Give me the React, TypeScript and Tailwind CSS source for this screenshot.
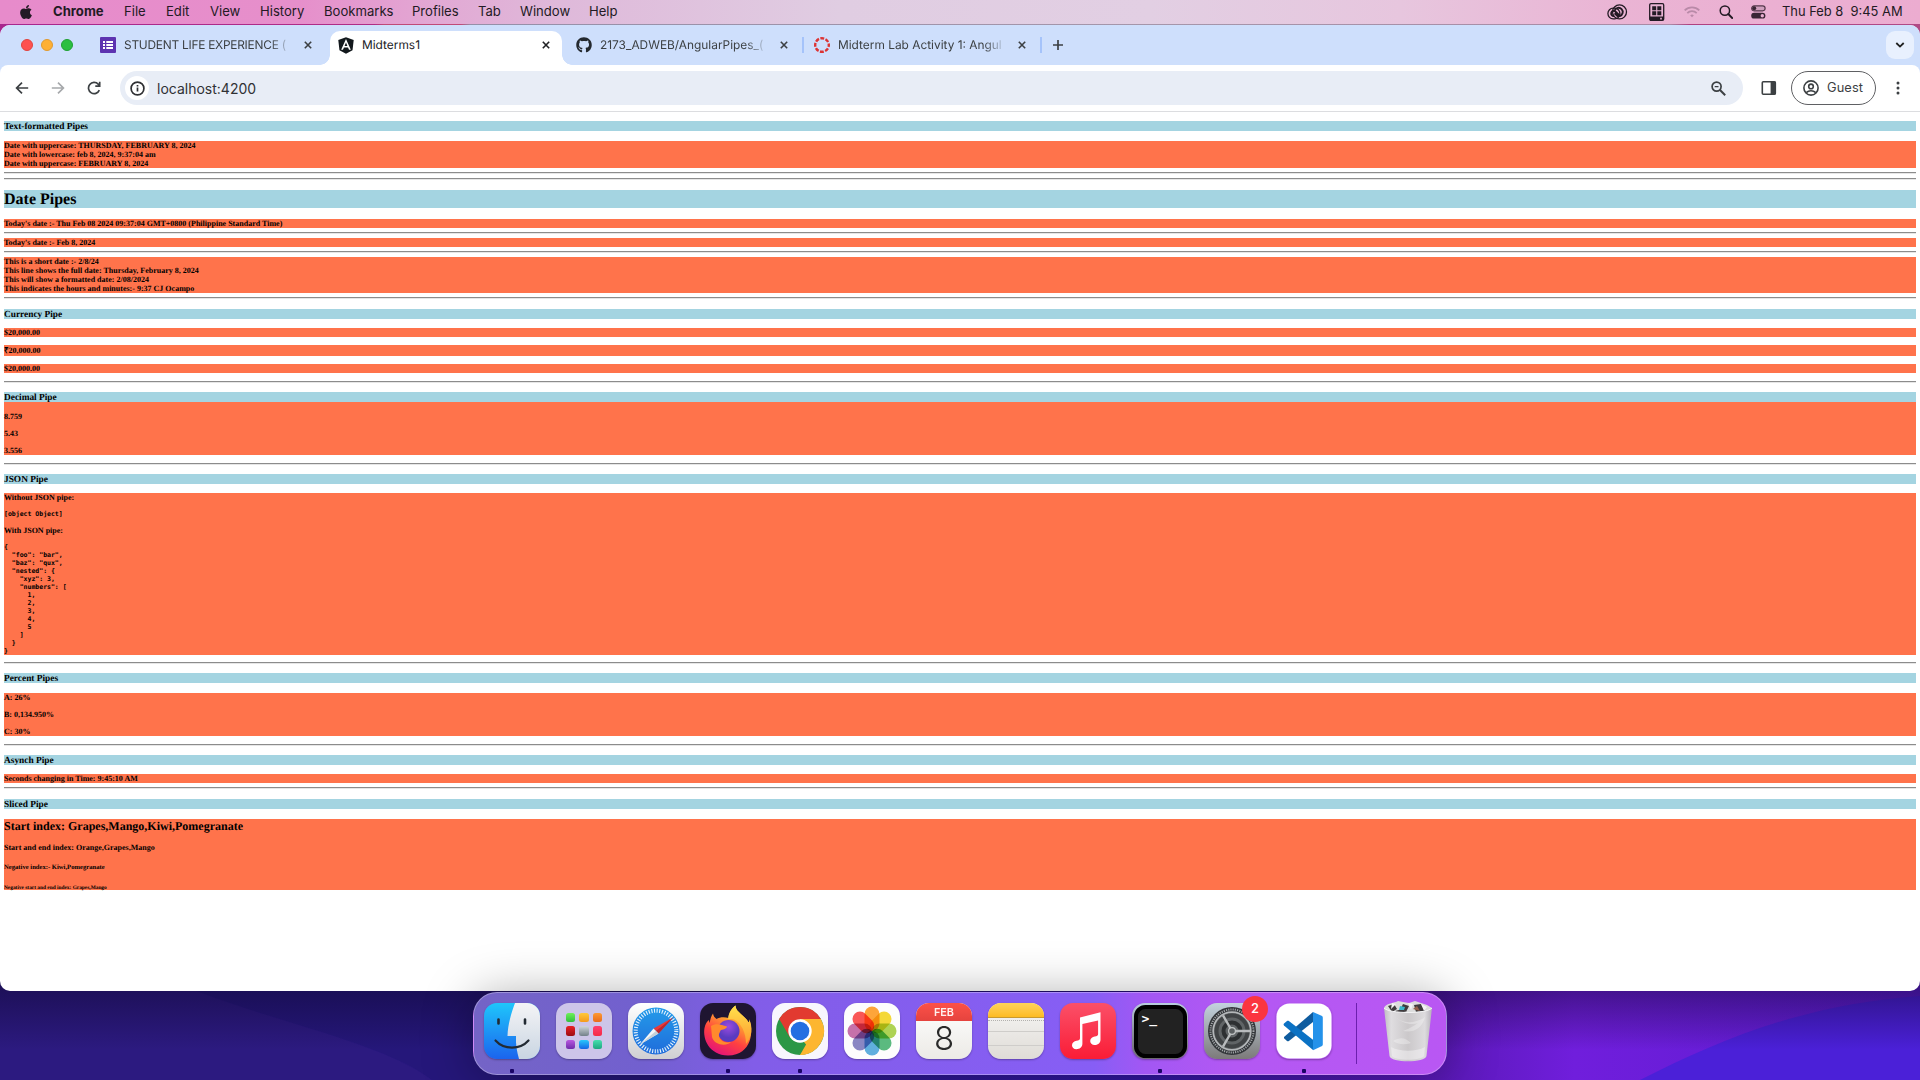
import React from "react";
import { FaAngular, FaApple, FaGithub } from "react-icons/fa";

const SERIF = "font-['Liberation_Serif',serif]";

/* ---------- menu bar ---------- */

const menus: [string, string][] = [
  ["Chrome", "w-[71px] font-bold"],
  ["File", "w-[42px]"],
  ["Edit", "w-[44px]"],
  ["View", "w-[50px]"],
  ["History", "w-[64px]"],
  ["Bookmarks", "w-[88px]"],
  ["Profiles", "w-[66px]"],
  ["Tab", "w-[42px]"],
  ["Window", "w-[69px]"],
  ["Help", "w-[40px]"],
];

function MenuBar() {
  return (
    <div className="relative flex h-[24px] shrink-0 items-center bg-[linear-gradient(90deg,#e78bcb_0,#e68fcb_300px,#e2a9d4_440px,#dfb9da_560px,#e0cde2_840px,#e2cfe3_1150px,#e7c6de_1400px,#eab4d4_1620px,#ecacd0_1920px)] font-['Inter',sans-serif] text-[13.1px] text-[#231a24]">
      <FaApple className="ml-[19px] mr-[20px] -mt-px size-[16px] w-[14px]" />
      {menus.map(([m, c]) => (
        <span key={m} className={"whitespace-nowrap " + c}>
          {m}
        </span>
      ))}
      <div className="ml-auto flex items-center">
        <svg className="mr-[21px] h-[16px] w-[21px]" viewBox="0 0 21 16" fill="none" stroke="#231a24">
          <rect x="5.500" y=".9" width="14" height="14" rx="7" strokeWidth="1.300" />
          <rect x=".9" y="4.200" width="12" height="10.700" rx="5.300" strokeWidth="1.300" />
          <path d="M12.500 11.500L8.600 7.700a2.600 2.600 0 1 0-1.500 4.400M7.600 6.600a4.200 4.200 0 1 1 5.200 5.400H10.500L7.600 9.300" strokeWidth="1.900" />
        </svg>
        <svg className="mr-[19px] h-[18px] w-[16px]" viewBox="0 0 16 18">
          <rect x=".7" y=".7" width="14" height="16.600" rx="1.300" fill="none" stroke="#231a24" strokeWidth="1.300" />
          <path d="M3.200 3.200h4v4h-4zM8.300 3.200h4v4h-4zM3.200 8.200h4v4h-4zM8.300 8.200h4v4h-4zM1 13.600h13.600V17H1z" fill="#231a24" />
          <path d="M11.200 14.800h1.600v1.600h-1.600z" fill="#eab8d6" />
        </svg>
        <svg className="mr-[19px] h-[12px] w-[16px]" viewBox="0 0 16 12" fill="none" stroke="#b98aa8" strokeWidth="1.800">
          <path d="M.7 4.400a10.500 10.500 0 0 1 14.600 0M3.300 7.100a6.700 6.700 0 0 1 9.400 0" />
          <path d="M6.200 9.400a2.400 2.400 0 0 1 3.600 0L8 11.300z" fill="#b98aa8" stroke="none" />
        </svg>
        <svg className="mr-[18px] h-[14px] w-[14px]" viewBox="0 0 14 14" fill="none" stroke="#231a24" strokeWidth="1.500">
          <circle cx="5.900" cy="5.600" r="4.700" />
          <path d="M9.300 9l3.900 4" strokeWidth="1.800" strokeLinecap="round" />
        </svg>
        <svg className="mr-[16px] h-[14px] w-[15px]" viewBox="0 0 15 14">
          <rect x=".7" y=".9" width="13.400" height="4.900" rx="2.450" fill="#cf9fbd" stroke="#54374b" strokeWidth="1.200" />
          <circle cx="3.200" cy="3.300" r="2" fill="#3a2635" />
          <rect x=".2" y="7.800" width="14.200" height="5.800" rx="2.900" fill="#3a2635" />
          <circle cx="11.300" cy="10.700" r="1.700" fill="#eab0d2" />
        </svg>
        <span className="w-[138px] whitespace-pre text-[12.9px]">Thu Feb 8&nbsp; 9:45 AM</span>
      </div>
    </div>
  );
}

/* ---------- browser chrome ---------- */

function Close({ c }: { c: string }) {
  return (
    <svg className={"size-[8px] shrink-0 " + c} viewBox="0 0 8 8" stroke="currentColor" strokeWidth="1.600">
      <path d="M.8.8l6.400 6.400M7.200.8L.8 7.200" />
    </svg>
  );
}

function Tabs() {
  return (
    <div className="flex h-[40px] shrink-0 items-center bg-[#cedffc] font-['Inter',sans-serif] text-[11.9px] text-[#3c4043] [text-rendering:geometricPrecision]">
      <div className="ml-[21px] flex gap-[8px]">
        <i className="size-[12px] rounded-full border border-[#e0443e] bg-[#fe5150]" />
        <i className="size-[12px] rounded-full border border-[#e09a30] bg-[#feb035]" />
        <i className="size-[12px] rounded-full border border-[#1fa032] bg-[#2bbf40]" />
      </div>
      <svg className="ml-[27px] size-[16px] shrink-0" viewBox="0 0 16 16">
        <rect width="16" height="16" rx="1" fill="#5d33b0" />
        <path d="M3 4h2v2H3zM6.300 4H13v2H6.300zM3 7h2v2H3zM6.300 7H13v2H6.300zM3 10h2v2H3zM6.300 10H13v2H6.300z" fill="#fff" />
      </svg>
      <span className="ml-[8px] w-[168px] whitespace-nowrap tracking-[-0.24px] [mask-image:linear-gradient(90deg,#000_146px,transparent)]">
        STUDENT LIFE EXPERIENCE (
      </span>
      <Close c="ml-[12px] mr-[18px]" />
      <div className="relative mt-[6px] flex h-[34px] w-[232px] items-center rounded-t-[10px] bg-white pb-[6px] text-[#202124]">
        <i className="absolute -left-[10px] bottom-0 size-[10px] bg-[radial-gradient(circle_at_0_0,#cedffc_9.5px,#fff_10px)]" />
        <i className="absolute -right-[10px] bottom-0 size-[10px] bg-[radial-gradient(circle_at_100%_0,#cedffc_9.5px,#fff_10px)]" />
        <FaAngular className="ml-[6px] h-[19px] w-[20px] text-[#12181c]" />
        <span className="ml-[6px]">Midterms1</span>
        <Close c="ml-auto mr-[12px]" />
      </div>
      <FaGithub className="ml-[14px] size-[16px] shrink-0 text-[#24292f]" />
      <span className="ml-[8px] w-[168px] whitespace-nowrap [mask-image:linear-gradient(90deg,#000_146px,transparent)]">
        2173_ADWEB/AngularPipes_(
      </span>
      <Close c="ml-[12px]" />
      <i className="ml-[14px] h-[16px] w-[2px] bg-[#a5c3fa]" />
      <svg className="ml-[10px] size-[16px] shrink-0" viewBox="0 0 16 16" fill="none">
        <circle cx="8" cy="8" r="6.800" stroke="#dc3434" strokeWidth="2.400" strokeDasharray="3.900 1.440" strokeDashoffset="1.900" />
      </svg>
      <span className="ml-[8px] w-[168px] whitespace-nowrap [mask-image:linear-gradient(90deg,#000_146px,transparent)]">
        Midterm Lab Activity 1: Angul
      </span>
      <Close c="ml-[12px]" />
      <i className="ml-[14px] h-[16px] w-[2px] bg-[#a5c3fa]" />
      <svg className="ml-[10px] size-[12px] shrink-0" viewBox="0 0 12 12" stroke="#3c4043" strokeWidth="1.700">
        <path d="M6 1v10M1 6h10" />
      </svg>
      <div className="ml-auto mr-[6px] flex size-[28px] items-center justify-center rounded-[9px] bg-[#e8f0fe]">
        <svg className="size-[10px]" viewBox="0 0 10 10" fill="none" stroke="#1f1f1f" strokeWidth="1.800">
          <path d="M1.300 3L5 6.600 8.700 3" />
        </svg>
      </div>
    </div>
  );
}

function Toolbar() {
  return (
    <div className="h-[47px] shrink-0 bg-[#cedffc]">
      <div className="flex h-[47px] items-center rounded-t-[8px] border-b border-[#dcdde0] bg-white font-['Inter',sans-serif] text-[#3c4043]">
        <svg className="ml-[15px] size-[14px]" viewBox="0 0 14 14" fill="none" stroke="#3c4043" strokeWidth="1.700">
          <path d="M13.200 7H1.800M7 1.600L1.600 7 7 12.400" />
        </svg>
        <svg className="ml-[22px] size-[14px]" viewBox="0 0 14 14" fill="none" stroke="#a7a9ac" strokeWidth="1.700">
          <path d="M.8 7h11.400M7 1.600L12.400 7 7 12.400" />
        </svg>
        <svg className="ml-[22px] size-[14px]" viewBox="0 0 14 14" fill="none" stroke="#3c4043" strokeWidth="1.700">
          <path d="M12.300 9.200A5.600 5.600 0 1 1 11.200 3.200L13 5M12.700.8V5.200H8.300" />
        </svg>
        <div className="ml-[19px] flex h-[34px] w-[1623px] items-center rounded-full bg-[#e8edf6]">
          <div className="ml-[5px] flex size-[24px] items-center justify-center rounded-full bg-white">
            <svg className="size-[15px]" viewBox="0 0 15 15" fill="none" stroke="#303134" strokeWidth="1.700">
              <circle cx="7.500" cy="7.500" r="6.400" />
              <path d="M7.500 6.600v4M7.500 4.100v1.500" strokeWidth="1.700" />
            </svg>
          </div>
          <span className="ml-[8px] text-[14px] text-[#303134]">localhost:4200</span>
          <svg className="ml-auto mr-[17px] size-[15px]" viewBox="0 0 15 15" fill="none" stroke="#3c4043" strokeWidth="1.700">
            <circle cx="5.600" cy="5.600" r="4.500" />
            <path d="M9 9l5.200 5.200" strokeWidth="2" />
            <path d="M3.700 5.600h3.800" strokeWidth="1.300" />
          </svg>
        </div>
        <svg className="ml-[18px] size-[16px]" viewBox="0 0 16 16">
          <rect x="1.300" y="1.800" width="13" height="12.400" rx="1" fill="none" stroke="#3c4043" strokeWidth="1.600" />
          <path d="M9.600 1.500h5v13h-5z" fill="#3c4043" />
        </svg>
        <div className="ml-[14px] flex h-[34px] w-[85px] items-center rounded-full border border-[#5f6063]">
          <svg className="ml-[11px] size-[16px]" viewBox="0 0 16 16" fill="none" stroke="#3c4043" strokeWidth="1.600">
            <circle cx="8" cy="8" r="7.100" />
            <circle cx="8" cy="6.400" r="2.300" />
            <path d="M3.200 12.600a7 7 0 0 1 9.600 0" />
          </svg>
          <span className="ml-[8px] text-[12.8px] tracking-[0.1px]">Guest</span>
        </div>
        <svg className="ml-[20px] h-[14px] w-[4px]" viewBox="0 0 4 14" fill="#3c4043">
          <circle cx="2" cy="2" r="1.500" />
          <circle cx="2" cy="7" r="1.500" />
          <circle cx="2" cy="12" r="1.500" />
        </svg>
      </div>
    </div>
  );
}

/* ---------- page content ---------- */

function Title({ children, c }: { children: React.ReactNode; c: string }) {
  return (
    <h3 className={"h-[10px] bg-[#a4d4e1] text-[9.36px] leading-[12px] " + c}>{children}</h3>
  );
}

function Rows({ lines, c }: { lines: string[]; c: string }) {
  return (
    <div className={"bg-[#ff734b] text-[8px] leading-[9px] " + c}>
      {lines.map((l) => (
        <p key={l}>{l}</p>
      ))}
    </div>
  );
}

function Rule({ c }: { c: string }) {
  return <hr className={"h-[2px] border-0 border-t border-b border-t-[#8c8c8c] border-b-[#e6e6e6] " + c} />;
}

const json = `{
  "foo": "bar",
  "baz": "qux",
  "nested": {
    "xyz": 3,
    "numbers": [
      1,
      2,
      3,
      4,
      5
    ]
  }
}`;

function Content() {
  return (
    <div className={"flex flex-1 flex-col px-[4px] font-bold text-black [text-rendering:geometricPrecision] " + SERIF}>
      <Title c="mt-[9px]">Text-formatted Pipes</Title>
      <Rows
        c="mt-[10px]"
        lines={[
          "Date with uppercase: THURSDAY, FEBRUARY 8, 2024",
          "Date with lowercase: feb 8, 2024, 9:37:04 am",
          "Date with uppercase: FEBRUARY 8, 2024",
        ]}
      />
      <Rule c="mt-[4px]" />
      <Rule c="mt-[4px]" />
      <h1 className="mt-[10px] h-[18px] bg-[#a4d4e1] text-[16px] leading-[19px]">Date Pipes</h1>
      <Rows c="mt-[11px]" lines={["Today's date :- Thu Feb 08 2024 09:37:04 GMT+0800 (Philippine Standard Time)"]} />
      <Rule c="mt-[4px]" />
      <Rows c="mt-[4px]" lines={["Today's date :- Feb 8, 2024"]} />
      <Rule c="mt-[4px]" />
      <Rows
        c="mt-[4px]"
        lines={[
          "This is a short date :- 2/8/24",
          "This line shows the full date: Thursday, February 8, 2024",
          "This will show a formatted date: 2/08/2024",
          "This indicates the hours and minutes:- 9:37 CJ Ocampo",
        ]}
      />
      <Rule c="mt-[4px]" />
      <Title c="mt-[10px]">Currency Pipe</Title>
      <Rows c="mt-[9px]" lines={["$20,000.00"]} />
      <Rows c="mt-[8px] h-[11px] pt-px" lines={["₹20,000.00"]} />
      <Rows c="mt-[8px]" lines={["$20,000.00"]} />
      <Rule c="mt-[8px]" />
      <Title c="mt-[9px]">Decimal Pipe</Title>
      <Rows c="flex flex-col gap-[8px] pt-[10px]" lines={["8.759", "5.43", "3.556"]} />
      <Rule c="mt-[8px]" />
      <Title c="mt-[9px]">JSON Pipe</Title>
      <div className="mt-[9px] h-[162px] bg-[#ff734b] text-[8px] leading-[9px]">
        <p>Without JSON pipe:</p>
        <pre className="mt-[8px] font-['DejaVu_Sans_Mono',monospace] text-[6.5px] leading-[8px]">[object Object]</pre>
        <p className="mt-[8px]">With JSON pipe:</p>
        <pre className="mt-[8px] font-['DejaVu_Sans_Mono',monospace] text-[6.5px] leading-[8px]">{json}</pre>
      </div>
      <Rule c="mt-[7px]" />
      <Title c="mt-[9px]">Percent Pipes</Title>
      <Rows c="mt-[10px] flex flex-col gap-[8px]" lines={["A: 26%", "B: 0,134.950%", "C: 30%"]} />
      <Rule c="mt-[8px]" />
      <Title c="mt-[9px]">Asynch Pipe</Title>
      <Rows c="mt-[9px]" lines={["Seconds changing in Time: 9:45:10 AM"]} />
      <Rule c="mt-[4px]" />
      <Title c="mt-[10px]">Sliced Pipe</Title>
      <div className="mt-[10px] h-[71px] bg-[#ff734b]">
        <h2 className="text-[12px] leading-[14px]">Start index: Grapes,Mango,Kiwi,Pomegranate</h2>
        <h3 className="mt-[10px] text-[8px] leading-[9px]">Start and end index: Orange,Grapes,Mango</h3>
        <h4 className="mt-[12px] text-[6.64px] leading-[8px]">Negative index:- Kiwi,Pomegranate</h4>
        <h5 className="mt-[13px] text-[5.36px] leading-[6px]">Negative start and end index: Grapes,Mango</h5>
      </div>
    </div>
  );
}

/* ---------- dock ---------- */

const TILE = "size-[56px]";

function Finder() {
  return (
    <svg className={TILE} viewBox="0 0 56 56">
      <defs>
        <linearGradient id="fb" x2="0" y2="1"><stop stopColor="#1fc6fb" /><stop offset="1" stopColor="#1b64ee" /></linearGradient>
        <linearGradient id="fw" x2="0" y2="1"><stop stopColor="#f4f4f6" /><stop offset="1" stopColor="#c9d5e2" /></linearGradient>
        <clipPath id="fc"><rect width="56" height="56" rx="13" /></clipPath>
      </defs>
      <g clipPath="url(#fc)">
        <path d="M0 0h56v56H0z" fill="url(#fb)" />
        <path d="M31 0C27 11 24 21 23.500 33H32C31.500 41 33 49 35 56H56V0z" fill="url(#fw)" />
      </g>
      <path d="M14.500 16.500v4M41 16.500v4" stroke="#222a33" strokeWidth="2.600" strokeLinecap="round" />
      <path d="M11.500 37.500C20 47 36 47 44.500 37.500" stroke="#222a33" strokeWidth="2.200" strokeLinecap="round" fill="none" />
    </svg>
  );
}

const padColors = [
  ["#6ef05b", "#2fbf3d"], ["#ffc93c", "#f59a1c"], ["#fd9a34", "#e96a1b"],
  ["#ea2027", "#9c0d13"], ["#cfd6da", "#73808a"], ["#fd3f72", "#f52a44"],
  ["#b957e0", "#6f2bab"], ["#29c8fb", "#1565e6"], ["#48dfae", "#1ea780"],
];

function Launchpad() {
  return (
    <div className={"grid grid-cols-[repeat(3,9.5px)] content-center justify-center gap-[4px] rounded-[13px] bg-[#cdc5e9] " + TILE}>
      {padColors.map(([a, b]) => (
        <i key={a} className="size-[9.5px] rounded-[2.5px]" style={{ background: `linear-gradient(${a},${b})` }} />
      ))}
    </div>
  );
}

function Safari() {
  return (
    <svg className={TILE} viewBox="0 0 56 56">
      <defs>
        <linearGradient id="sw" x2="0" y2="1"><stop stopColor="#fff" /><stop offset="1" stopColor="#cfcfd2" /></linearGradient>
        <linearGradient id="sb" x2="0" y2="1"><stop stopColor="#249be9" /><stop offset="1" stopColor="#1f6cdb" /></linearGradient>
      </defs>
      <rect width="56" height="56" rx="13" fill="url(#sw)" />
      <circle cx="28" cy="28" r="23.500" fill="url(#sb)" />
      <circle cx="28" cy="28" r="20.300" fill="none" stroke="#e4f2fd" strokeWidth="4" strokeDasharray="1.100 1.557" />
      <path d="M45 14.500L25.500 25.500l5 5z" fill="#e8393a" />
      <path d="M12 41.500L25.500 25.500l5 5z" fill="#f4f6f8" />
      <path d="M45 14.500L30.500 30.500 28 28z" fill="#b82730" />
      <path d="M12 41.500L30.500 30.500 28 28z" fill="#c5d0d8" />
    </svg>
  );
}

function Firefox() {
  return (
    <svg className={TILE} viewBox="0 0 56 56">
      <defs>
        <linearGradient id="ff" x1=".8" y1="0" x2=".3" y2="1"><stop stopColor="#ffe14a" /><stop offset=".35" stopColor="#ff9a31" /><stop offset=".65" stopColor="#ff4140" /><stop offset="1" stopColor="#e3127a" /></linearGradient>
        <radialGradient id="fp" cx=".5" cy=".3"><stop stopColor="#9b4be0" /><stop offset="1" stopColor="#5a3bc0" /></radialGradient>
        <linearGradient id="fy" x2="0" y2="1"><stop stopColor="#ffe24c" /><stop offset="1" stopColor="#ff9a2f" /></linearGradient>
      </defs>
      <rect width="56" height="56" rx="13" fill="#1f1531" />
      <path d="M13 10.500c.5 2.500 1.500 4 3.500 5.500 3-2 8-2.500 12-1 0-5 3-9.500 7-12.500 0 7 10 10 13 17 1-1 1-2 .5-3.500C54 27 52.500 52 28 52.500 9 52 2.500 36 4.500 25c.8-4 2.500-6.500 4.500-8 0 1 .2 2 .8 3 .4-4 1.400-7 3.200-9.500z" fill="url(#ff)" />
      <path d="M28 16c1-6 3-10 7.500-13.500 0 7 10 10 13 17 .8-1 1-2 .5-3.500 4 8 3 18-3 25 0-12-5-21-12-24.500-2-1-4-.5-6-.500z" fill="url(#fy)" />
      <circle cx="28.500" cy="28" r="11" fill="url(#fp)" />
      <path d="M11 23c4-3 10-2 16 .5 0 2-3 3-6 3.500-1 1-1 2-2 4-1 5 5 10 12 8-5 5-17 3-19-5z" fill="#ff8a2c" />
    </svg>
  );
}

function ChromeIcon() {
  return (
    <svg className={TILE} viewBox="0 0 56 56">
      <rect width="56" height="56" rx="13" fill="#f8f6fd" />
      <circle cx="28" cy="28" r="24" fill="#2b9746" />
      <path d="M28 28L28 52A24 24 0 0 0 48.800 16H28z" fill="#fdb630" />
      <path d="M38.500 34L28 52l-3-12z" fill="#fdb630" />
      <path d="M28 28L7.200 16A24 24 0 0 1 48.800 16H28z" fill="#e23a30" />
      <path d="M7.200 16L17.700 34l10-6L28 16z" fill="#e23a30" />
      <path d="M17.700 34L28 52l8-8-8-10z" fill="#2b9746" />
      <path d="M38.400 34L28 52h2A24 24 0 0 0 50 28l-8-8z" fill="#fdb630" />
      <circle cx="28" cy="28" r="11.700" fill="#fff" />
      <circle cx="28" cy="28" r="9.300" fill="#246fe2" />
    </svg>
  );
}

const petals = ["#ff9a1f", "#f5d51e", "#a5cf3c", "#46b36e", "#4ba6dc", "#7b78bd", "#c05fa0", "#fb4140"];

function Photos() {
  return (
    <svg className={TILE} viewBox="0 0 56 56">
      <rect width="56" height="56" rx="13" fill="#fdfdfd" />
      {petals.map((p, i) => (
        <rect key={p} x="20.500" y="3.500" width="15" height="24.500" rx="7.500" fill={p} fillOpacity=".88" className="mix-blend-multiply" transform={`rotate(${i * 45} 28 28)`} />
      ))}
    </svg>
  );
}

function Calendar() {
  return (
    <div className={"flex flex-col items-center overflow-hidden rounded-[13px] bg-linear-to-b from-white to-[#eceae6] font-['Inter',sans-serif] " + TILE}>
      <div className="h-[18px] w-full bg-linear-to-b from-[#fc5148] to-[#e5433e] text-center text-[10.8px] leading-[20px] font-semibold text-[#fff1ee]">FEB</div>
      <div className="text-[33px] leading-[34px] font-light text-[#2a2a2a]">8</div>
    </div>
  );
}

function Notes() {
  return (
    <div className={"overflow-hidden rounded-[13px] bg-linear-to-b from-[#f7f6f4] to-[#dfdcd7] " + TILE}>
      <div className="h-[15px] border-b border-[#c89a30] bg-linear-to-b from-[#ffd358] to-[#fdbb20]" />
      <div className="mt-[2px] border-t border-dotted border-[#b3b1ae]" />
      <div className="mt-[10px] h-[15px] border-y border-[#cfcdca]" />
    </div>
  );
}

function Music() {
  return (
    <svg className={TILE} viewBox="0 0 56 56">
      <defs><linearGradient id="mu" x2="0" y2="1"><stop stopColor="#fb5068" /><stop offset="1" stopColor="#fa1c36" /></linearGradient></defs>
      <rect width="56" height="56" rx="13" fill="url(#mu)" />
      <path d="M20 14.500L40.500 9.300V36.500c0 4-3 5.500-5.800 5.500s-4.500-1.800-4.500-4c0-2.600 2.200-4 4.500-4.500s3.400-.8 3.400-2.500V17.600L22.400 21v19.500c0 4-3 5.700-5.900 5.700S12 44.400 12 42.200c0-2.600 2.200-4 4.500-4.500s3.500-.8 3.500-2.500z" fill="#fff" />
    </svg>
  );
}

function Terminal() {
  return (
    <div className={"rounded-[13px] bg-linear-to-b from-[#b9cede] via-[#8d929c] to-[#6c696e] p-[1.5px] " + TILE}>
      <div className="size-full rounded-[11.5px] border-[4px] border-black bg-[#222] pt-[2px] pl-[4px] font-['DejaVu_Sans_Mono',monospace] text-[13px] leading-[15px] font-bold text-white">
        &gt;_
      </div>
    </div>
  );
}

function Settings() {
  return (
    <div className={"relative " + TILE}>
      <svg className="size-full" viewBox="0 0 56 56" fill="none">
        <defs><linearGradient id="sg" x2="0" y2="1"><stop stopColor="#c3d3de" /><stop offset="1" stopColor="#7c7a7a" /></linearGradient></defs>
        <rect width="56" height="56" rx="13" fill="url(#sg)" />
        <circle cx="28" cy="28" r="24" fill="#33363a" />
        <circle cx="28" cy="28" r="21.500" stroke="#a3a7a9" strokeWidth="2" strokeDasharray="1.100 1.151" />
        <circle cx="28" cy="28" r="18.800" fill="#606466" stroke="#b4b7b9" strokeWidth="1.800" />
        <circle cx="28" cy="28" r="15.500" stroke="#404345" strokeWidth="4" />
        <circle cx="28" cy="28" r="8.500" stroke="#2d3032" strokeWidth="4" />
        <path d="M28 28H46M28 28L19 12.400M28 28L19 43.600" stroke="#b8bbbd" strokeWidth="2.400" />
        <circle cx="28" cy="28" r="3.400" fill="#5b5f61" stroke="#c2c5c6" strokeWidth="1.200" />
      </svg>
      <div className="absolute -top-[7px] -right-[8px] flex size-[26px] items-center justify-center rounded-full bg-[#fb3540] font-['Inter',sans-serif] text-[13px] font-medium text-white">2</div>
    </div>
  );
}

function Code() {
  return (
    <svg className={TILE} viewBox="0 0 56 56">
      <rect x=".5" y=".5" width="55" height="55" rx="13" fill="#fff" />
      <path d="M8 35.200l3 2.700c.6.400 1.300.4 1.900 0L37 19V9L8 34z" fill="#0f5c9f" />
      <path d="M8 20.500l3-2.500c.6-.4 1.300-.4 1.900 0L37 36.800V47L8 22.500c-.6-.6-.6-1.400 0-2z" fill="#0b72c4" />
      <path d="M37 47.300V9l8.500 3.800c.8.400 1.300 1 1.300 2v26.500c0 .9-.5 1.600-1.300 2z" fill="#2492ea" />
    </svg>
  );
}

function Trash() {
  return (
    <svg className="h-[64px] w-[50px]" viewBox="0 0 50 64">
      <defs>
        <linearGradient id="tr"><stop stopColor="#c0bdc2" /><stop offset=".15" stopColor="#dfdde0" /><stop offset=".5" stopColor="#cbc8ca" /><stop offset=".85" stopColor="#dddbde" /><stop offset="1" stopColor="#b5b1b9" /></linearGradient>
      </defs>
      <path d="M1 9C3 4 12 4 15 2l5 1 6 1 6-2 6 2 6 2 5 3-2 5H3z" fill="#dcdcdc" />
      <path d="M5 7l6-2 3 5-5 3zM20 5l6 2-3 6-5-4zM31 6l7-1 4 7-9 1zM12 12l8-2 3 4-9 1z" fill="#3f3b3d" />
      <path d="M17 7l5 1-1 3-5 0z" fill="#37b7c9" />
      <path d="M30 10l4-3 3 5z" fill="#94604b" />
      <path d="M38 5l6 3-3 4zM25 4l5 1-2 6zM9 4l4 1-5 5z" fill="#f4f4f4" />
      <path d="M1 9c5 6 43 6 48 0L43.500 57c-1 7-36 7-37 0z" fill="url(#tr)" />
      <path d="M10 16c9 9 20 9 31 3-6 9-20 8-31-3zM20 32c8-3 16-8 22-14-3 12-12 16-22 14zM10 42c7-4 12-4 18 2-6 2-12 2-18-2z" fill="#fff" opacity=".3" />
      <path d="M8 48c10 5 24 5 34 0l-1 9c-3 5-29 5-32 0z" fill="#f5f4f6" opacity=".5" />
      <path d="M1 9c5 6 43 6 48 0" fill="none" stroke="#f5f5f7" />
    </svg>
  );
}

const apps: [React.ComponentType, boolean][] = [
  [Finder, true], [Launchpad, false], [Safari, false], [Firefox, true], [ChromeIcon, true], [Photos, false],
  [Calendar, false], [Notes, false], [Music, false], [Terminal, true], [Settings, false], [Code, true],
];

function Dock() {
  return (
    <div className="relative z-10 mt-px flex h-[83px] w-[974px] rounded-[24px] border border-white/30 bg-[linear-gradient(90deg,#7464c6_0,#7260cf_170px,#825de8_280px,#875ef5_620px,#a257f4_670px,#b358f3_760px,#b957f3_974px)] pt-[10px] pl-[2px] shadow-[0_4px_50px_rgba(0,0,0,0.34)]">
      {apps.map(([Icon, running], i) => (
        <div key={i} className="flex w-[72px] flex-col items-center">
          <div className="rounded-[13px] shadow-[0_1px_2px_rgba(0,0,0,0.3)]">
            <Icon />
          </div>
          {running && <i className="mt-[10px] size-[4px] rounded-[1px] bg-[#1a0566]" />}
        </div>
      ))}
      <i className="ml-[16px] h-[61px] w-px bg-[#6c1fae]" />
      <div className="-mt-[4px] ml-[26px]">
        <Trash />
      </div>
    </div>
  );
}

/* ---------- desktop ---------- */

function Wallpaper() {
  return (
    <svg className="absolute inset-0 h-full w-full" viewBox="0 0 1920 1080" preserveAspectRatio="none">
      <defs>
        <linearGradient id="w1"><stop stopColor="#2f1b87" /><stop offset=".35" stopColor="#2a1a85" /><stop offset=".6" stopColor="#3217a6" /><stop offset=".75" stopColor="#5a19b8" /><stop offset=".82" stopColor="#701edc" /><stop offset="1" stopColor="#5c1cd0" /></linearGradient>
        <linearGradient id="w2" x2="0" y2="1"><stop stopColor="#0c0428" stopOpacity=".5" /><stop offset="1" stopColor="#0c0428" stopOpacity="0" /></linearGradient>
        <linearGradient id="w3"><stop stopColor="#a8268e" /><stop offset=".195" stopColor="#b02c86" /><stop offset=".2" stopColor="#c04a78" /><stop offset=".24" stopColor="#c04a78" /><stop offset=".245" stopColor="#958fa8" /><stop offset=".6" stopColor="#a596aa" /><stop offset=".87" stopColor="#a98aa5" /><stop offset=".88" stopColor="#b04080" /><stop offset="1" stopColor="#b04a86" /></linearGradient>
      </defs>
      <path d="M0 0h1920v500H0z" fill="url(#w3)" />
      <path d="M0 500h1920v580H0z" fill="url(#w1)" />
      <path d="M170 980C260 1020 380 1040 432 1080H0V980z" fill="#2c1a80" />
      <path d="M170 980C260 1020 380 1040 432 1080H800V980z" fill="#25177a" />
      <path d="M1640 1080C1720 1040 1800 1005 1920 996v84z" fill="#4b20d8" />
      <path d="M0 980h1920v70H0z" fill="url(#w2)" />
    </svg>
  );
}

export default function App() {
  return (
    <div className="relative flex h-[1080px] w-[1920px] flex-col items-center overflow-hidden">
      <Wallpaper />
      <div className="relative w-full">
        <MenuBar />
      </div>
      <div className="relative mt-px flex h-[966px] w-full flex-col overflow-hidden rounded-[10px] bg-white">
        <Tabs />
        <Toolbar />
        <Content />
      </div>
      <Dock />
    </div>
  );
}
